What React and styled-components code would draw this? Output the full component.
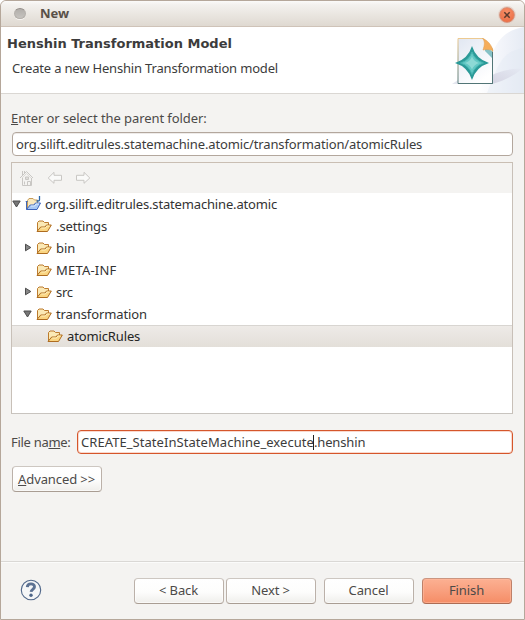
import React from "react";
import styled, { createGlobalStyle, css } from "styled-components";

const GlobalStyle = createGlobalStyle`
  * { box-sizing: border-box; }
  body { margin: 0; background: #fff; }
  button, input { font: inherit; }
  svg { display: block; flex: none; }
`;

const Window = styled.main`
  display: flex;
  flex-direction: column;
  width: 525px;
  height: 620px;
  overflow: hidden;
  border: 1px solid #b5a79a;
  border-radius: 6px 6px 0 0;
  background: #f4f3f1;
  color: #3c3c3c;
  font: 13px/22px "Noto Sans", sans-serif;
`;

const TitleBar = styled.header`
  display: flex;
  align-items: center;
  flex: none;
  height: 26px;
  padding: 0 9px 0 13px;
  border-bottom: 1px solid #cfc3b8;
  border-radius: 5px 5px 0 0;
  background: linear-gradient(#fbfaf9 0, #f3f1ee 15%, #dfd9d1 100%);
`;

const WindowDot = styled.span`
  width: 12px;
  height: 11px;
  border-radius: 50%;
  border: 1px solid #b3afaa;
  border-top-color: #928d88;
  background: linear-gradient(#b1aeaa, #c6c3bf);
  box-shadow: 0 1px 0 #f7f5f2;
`;

const WindowTitle = styled.h1`
  flex: 1;
  margin: -2px 0 0 14px;
  color: #595048;
  font: bold 13px/24px "Noto Sans", sans-serif;
`;

const CloseButton = styled.button`
  display: grid;
  place-items: center;
  width: 16px;
  height: 16px;
  margin-top: 2px;
  padding: 0;
  border: 1px solid #d69580;
  border-radius: 50%;
  background: radial-gradient(circle at 50% 30%, #f78f68, #e9683f);
  box-shadow: 0 0 0 1px #e6d5cb;
`;

const Banner = styled.section`
  display: flex;
  justify-content: space-between;
  flex: none;
  height: 67px;
  border-bottom: 1px solid #dad7d3;
  background: #fff;
`;

const BannerText = styled.div`
  padding: 6px 0 0 6px;
`;

const BannerTitle = styled.h2`
  margin: 0;
  font: bold 13px/22px "DejaVu Sans", sans-serif;
`;

const BannerMessage = styled.p`
  margin: 2px 0 0 5px;
  letter-spacing: -0.175px;
`;

const Form = styled.section`
  display: flex;
  flex-direction: column;
  flex: 1;
  padding: 13px 11px 0 10px;
`;

const Label = styled.label`
  flex: none;
  color: #4c4a48;
  letter-spacing: ${({ $spacing }) => $spacing || 0}px;
`;

const Mnemonic = styled.span`
  text-decoration: underline;
  text-decoration-thickness: 1px;
  text-underline-offset: 1px;
  text-decoration-skip-ink: none;
`;

const Field = styled.div`
  display: flex;
  align-items: center;
  flex: ${({ $grow }) => ($grow ? 1 : "none")};
  height: 24px;
  padding: 0 3px;
  border: 1px solid #b3a79d;
  border-radius: 4px;
  background: #fff;
  box-shadow: inset 0 1px 0 #eeebe9;
  white-space: pre;
  letter-spacing: -0.135px;

  ${({ $focused }) =>
    $focused &&
    css`
      border-color: #d5562b;
      box-shadow: inset 0 0 0 1px #f9d9ce;
      letter-spacing: 0.055px;
    `}
`;

const FolderField = styled(Field)`
  margin: 3px 0 0 1px;
`;

const Caret = styled.span`
  width: 1px;
  height: 15px;
  margin: 0 0 0 -1px;
  background: #222;
`;

const Extension = styled.span`
  letter-spacing: -0.15px;
`;

const Panel = styled.div`
  flex: none;
  height: 252px;
  margin-top: 6px;
  border: 1px solid #c9beb3;
  border-color: #c9beb3 #c8c0b8 #c8c4bf #c8c0b8;
  background: #fff;
`;

const Toolbar = styled.div`
  display: flex;
  align-items: center;
  gap: 12px;
  height: 30px;
  padding: 0 7px;
  background: #f4f3f1;
`;

const Row = styled.div`
  display: flex;
  align-items: center;
  height: 22px;
  padding-left: ${({ $depth }) => $depth * 11}px;
  color: #333;
  letter-spacing: ${({ $spacing }) => $spacing}px;

  ${({ $selected }) =>
    $selected &&
    css`
      background: linear-gradient(#eeebe8, #e3dfd9);
      box-shadow: inset 0 1px 0 #d8d5d1;
      color: #252525;
    `}
`;

const Expander = styled.span`
  display: grid;
  place-items: center;
  width: 9px;
  height: 22px;
  padding-bottom: 1px;
`;

const RowIcon = styled.span`
  margin: 0 ${({ $root }) => ($root ? 3 : 4)}px 0 4px;
`;

const FileRow = styled.div`
  display: flex;
  align-items: center;
  flex: none;
  gap: 6px;
  margin-top: 16px;
`;

const FileLabel = styled(Label)`
  width: 60px;
`;

const Button = styled.button`
  flex: none;
  width: 90px;
  height: 26px;
  padding: 0 1px 1px 0;
  border: 1px solid #bdb4ab;
  border-color: #cdc7c1 #bbb1a9 #a99d93;
  border-radius: 4px;
  background: linear-gradient(#fff 0, #fdfdfc 55%, #efeeeb 100%);
  box-shadow: inset 0 0 0 1px #fff9;
  color: #4c4a48;
  line-height: 22px;
  letter-spacing: -0.1px;

  ${({ $primary }) =>
    $primary &&
    css`
      border-color: #cb9580 #be8068 #ac6c54;
      background: linear-gradient(#fcb092 0, #f9a180 45%, #f58d66 100%);
      box-shadow: inset 0 0 0 1px #ffbb9e99;
    `}
`;

const AdvancedButton = styled(Button)`
  margin: 12px 0 0 1px;
`;

const Footer = styled.footer`
  display: flex;
  align-items: center;
  flex: none;
  height: 58px;
  padding: 0 12px 0 19px;
  border-top: 1px solid #dad8d5;
  box-shadow: inset 0 1px 0 #fbfbfa;
`;

const HelpButton = styled.span`
  padding-bottom: 2px;
`;

const ButtonGroup = styled.div`
  display: flex;
  gap: 2px;
  margin: 0 8px 0 auto;
`;

const FooterGroup = styled(ButtonGroup)`
  gap: 8px;
  margin: 0;
`;

const CloseIcon = () => (
  <svg width="8" height="8" viewBox="0 0 8 8">
    <path d="M1.300 1.300l5.400 5.400M6.700 1.300L1.300 6.700" stroke="#5c3a2d" strokeWidth="1.5" />
  </svg>
);

const HomeIcon = () => (
  <svg width="16" height="16" viewBox="0 0 16 16" fill="none" stroke="#c9c7c4">
    <path d="M1 8L7.500 1.500 14 8M3.500 1v4M5.500 1v2M3.500 8v7.500h9V8" />
    <path d="M3 8l4.500-4.500L12 8" stroke="#dddbd8" />
    <path d="M6.500 7h3v2.500h-3zM8 7v2.500M8.500 15.500v-4h3v4M5.500 11.500v3" />
  </svg>
);

const BackArrowIcon = () => (
  <svg width="16" height="16" viewBox="0 0 16 16" fill="#fafaf9" stroke="#c9c7c4">
    <path d="M1.200 8L7 2.300v3h7.500v5H7v3z" />
  </svg>
);

const ForwardArrowIcon = () => (
  <svg width="16" height="16" viewBox="0 0 16 16" fill="#fafaf9" stroke="#c9c7c4">
    <path d="M14.800 8L9 2.300v3H1.500v5H9v3z" />
  </svg>
);

const ExpandedIcon = () => (
  <svg width="9" height="8" viewBox="0 0 9 8">
    <path d="M.8 1h7.4L4.500 7z" fill="#777" stroke="#4d4d4d" />
  </svg>
);

const CollapsedIcon = () => (
  <svg width="8" height="9" viewBox="0 0 8 9">
    <path d="M1.500 1.200v6.600L6.800 4.500z" fill="#888" stroke="#4d4d4d" />
  </svg>
);

const FolderIcon = () => (
  <svg width="16" height="16" viewBox="0 0 16 16">
    <path d="M1.500 13V4.500l1.500-1.500h4l1.500 1.500h4v3" fill="#fbe9b5" stroke="#bc7b2e" />
    <path d="M1 13.500L4.700 9H9l1.500-2H15.300L11.500 13.500z" fill="#fad582" stroke="#ae6c20" strokeLinejoin="round" />
    <path d="M5.300 10h4.200l1.300-2h2.800" fill="none" stroke="#fff0bd" />
  </svg>
);

const ProjectIcon = () => (
  <svg width="17" height="16" viewBox="0 0 17 16">
    <path d="M2.500 13V4.500L4 2.500h4L9.500 4h3v5" fill="#f9e8bd" stroke="#c79b57" />
    <path d="M.7 5.500h2M1.500 6v7.500" stroke="#4169b7" />
    <path d="M1.500 13.500L5.200 9H9l1.400-2h5.100L12 13.500z" fill="#a8c8f4" stroke="#3e65bc" strokeLinejoin="round" />
    <path d="M5.800 10h4l1.200-2h3" fill="none" stroke="#ddecff" />
    <path d="M14.500 0v3.700q0 1.300-1.500 1.300h-1.500" fill="none" stroke="#2865a9" strokeWidth="1.3" />
  </svg>
);

const HelpIcon = () => (
  <svg width="22" height="22" viewBox="0 0 22 22" fill="none">
    <circle cx="11" cy="11" r="9.700" fill="#f5f6f7" stroke="#4f6689" strokeWidth="1.100" />
    <path d="M7.300 8.100C7.400 3.700 14.700 3.900 14.500 7.900c-.1 2.400-3.300 2.400-3.400 5" stroke="#5d7293" strokeWidth="2.900" />
    <circle cx="11" cy="16.200" r="1.700" fill="#4f6689" />
  </svg>
);

const BannerArt = () => (
  <svg width="75" height="66" viewBox="0 0 75 66">
    <defs>
      <linearGradient id="sky" x1="0" x2="1">
        <stop stopColor="#fff" />
        <stop offset=".5" stopColor="#f3f5fa" />
        <stop offset="1" stopColor="#e6ebf4" />
      </linearGradient>
      <linearGradient id="shade" x1="0" x2="1" y1="1" y2="0">
        <stop stopColor="#cbc8d9" />
        <stop offset="1" stopColor="#e4e8f2" />
      </linearGradient>
      <linearGradient id="sheet" x1="0" x2=".6" y2="1">
        <stop stopColor="#e1e7f2" />
        <stop offset="1" stopColor="#fff" />
      </linearGradient>
      <linearGradient id="edge" x2="0" y2="1">
        <stop stopColor="#edca91" />
        <stop offset="1" stopColor="#537878" />
      </linearGradient>
    </defs>
    <path d="M28 66C44 46 36 6 75 0v66z" fill="url(#sky)" />
    <path d="M38 66C48 42 51 24 75 21v45z" fill="#e2e8f3" opacity=".4" />
    <path d="M43 57V48C52 44 62 41 73 42 64 49 55 54 43 57z" fill="url(#shade)" opacity=".7" />
    <path d="M3 57l6-4v4z" fill="#e4e6ef" />
    <path d="M9 11.500h25.500L43.500 22v34.500H9z" fill="url(#sheet)" stroke="url(#edge)" />
    <path d="M43.500 25v31.500H9" fill="none" stroke="#527576" />
    <path d="M36 20v4l7 7v-7z" fill="#85c1c6" />
    <path d="M33.500 11.500c2.800 2.500 2 7 .5 11.500 3.500-.9 6.500-.5 10 .5C42.500 18 38.500 13 33.500 11.500z" fill="#f5ad5b" stroke="#e2a154" strokeWidth=".6" />
    <path d="M23 19q4 13 17 17Q27 40 23 53 19 40 6 36 19 32 23 19z" fill="#2b9a98" />
    <path d="M23 25q3 8.500 11.500 11Q26 38.500 23 47.500 20 38.500 11.500 36 20 33.500 23 25z" fill="#62c8c4" stroke="#45b3b0" />
    <path d="M23 29.500q2 5 7 6.500-5 1.500-7 6.500-2-5-7-6.500Q21 34.500 23 29.500z" fill="#8cd9d5" />
  </svg>
);

const tree = [
  { name: "org.silift.editrules.statemachine.atomic", depth: 0, state: "open", root: true, spacing: -0.16 },
  { name: ".settings", depth: 1, spacing: -0.1 },
  { name: "bin", depth: 1, state: "closed", spacing: 0 },
  { name: "META-INF", depth: 1, spacing: 0.2 },
  { name: "src", depth: 1, state: "closed", spacing: -0.3 },
  { name: "transformation", depth: 1, state: "open", spacing: -0.1 },
  { name: "atomicRules", depth: 2, selected: true, spacing: -0.13 },
];

export default function App() {
  return (
    <>
      <GlobalStyle />
      <Window>
        <TitleBar>
          <WindowDot />
          <WindowTitle>New</WindowTitle>
          <CloseButton aria-label="Close"><CloseIcon /></CloseButton>
        </TitleBar>
        <Banner>
          <BannerText>
            <BannerTitle>Henshin Transformation Model</BannerTitle>
            <BannerMessage>Create a new Henshin Transformation model</BannerMessage>
          </BannerText>
          <BannerArt />
        </Banner>
        <Form>
          <Label $spacing={-0.08}><Mnemonic>E</Mnemonic>nter or select the parent folder:</Label>
          <FolderField>org.silift.editrules.statemachine.atomic/transformation/atomicRules</FolderField>
          <Panel>
            <Toolbar><HomeIcon /><BackArrowIcon /><ForwardArrowIcon /></Toolbar>
            {tree.map((item) => (
              <Row key={item.name} $depth={item.depth} $selected={item.selected} $spacing={item.spacing}>
                <Expander>
                  {item.state === "open" && <ExpandedIcon />}
                  {item.state === "closed" && <CollapsedIcon />}
                </Expander>
                <RowIcon $root={item.root}>{item.root ? <ProjectIcon /> : <FolderIcon />}</RowIcon>
                {item.name}
              </Row>
            ))}
          </Panel>
          <FileRow>
            <FileLabel $spacing={-0.3}>File na<Mnemonic>m</Mnemonic>e:</FileLabel>
            <Field $focused $grow>
              <span>CREATE_StateInStateMachine_execute</span>
              <Caret />
              <Extension>.henshin</Extension>
            </Field>
          </FileRow>
          <AdvancedButton><Mnemonic>A</Mnemonic>dvanced &gt;&gt;</AdvancedButton>
        </Form>
        <Footer>
          <HelpButton><HelpIcon /></HelpButton>
          <ButtonGroup>
            <Button>&lt; Back</Button>
            <Button>Next &gt;</Button>
          </ButtonGroup>
          <FooterGroup>
            <Button>Cancel</Button>
            <Button $primary>Finish</Button>
          </FooterGroup>
        </Footer>
      </Window>
    </>
  );
}
